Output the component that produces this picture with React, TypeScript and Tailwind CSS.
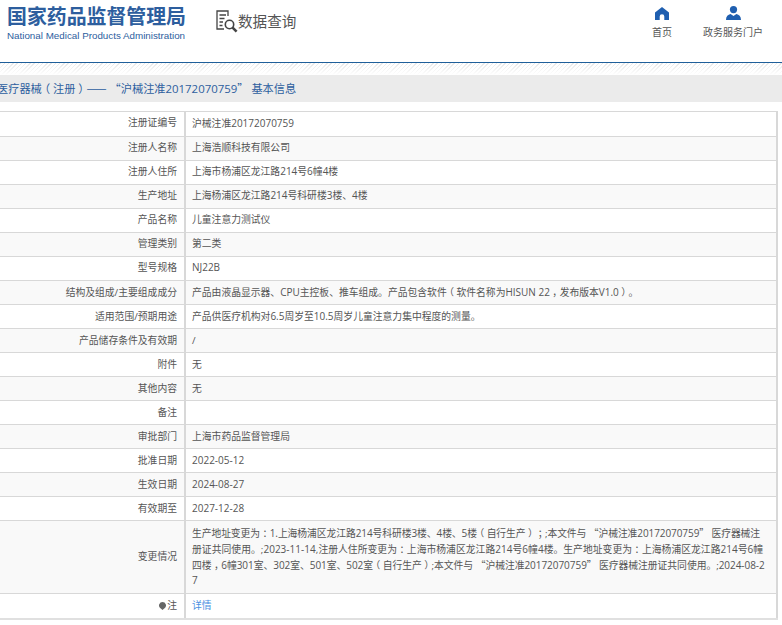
import React from "react";

// Punctuation drawn centred in its em box, quotes and dashes from the CJK face, Latin runs a touch larger.
function fmt(s: string): React.ReactNode[] {
  return s.split(/([（）：；，“”]|—+|[0-9A-Za-z.\-]+)/).map((p, i) => {
    if (!p) return null;
    if ("（）：；，".includes(p))
      return (
        <span key={i} className="px-[0.25em] font-['Noto_Sans_CJK_SC'] [font-feature-settings:'halt']">
          {p}
        </span>
      );
    if (p.startsWith("—"))
      return (
        <span key={i} className="font-['Noto_Sans_CJK_SC'] text-[12px]">
          {p}
        </span>
      );
    if ("“”".includes(p))
      return (
        <span key={i} className="font-['Noto_Sans_CJK_SC']">
          {p}
        </span>
      );
    if (/^[0-9A-Za-z.\-]+$/.test(p))
      return (
        <span key={i} className="text-[1.02em]">
          {p}
        </span>
      );
    return <React.Fragment key={i}>{p}</React.Fragment>;
  });
}

const rows: [string, string][] = [
  ["注册证编号", "沪械注准20172070759"],
  ["注册人名称", "上海浩顺科技有限公司"],
  ["注册人住所", "上海市杨浦区龙江路214号6幢4楼"],
  ["生产地址", "上海杨浦区龙江路214号科研楼3楼、4楼"],
  ["产品名称", "儿童注意力测试仪"],
  ["管理类别", "第二类"],
  ["型号规格", "NJ22B"],
  ["结构及组成/主要组成成分", "产品由液晶显示器、CPU主控板、推车组成。产品包含软件（软件名称为HISUN 22，发布版本V1.0）。"],
  ["适用范围/预期用途", "产品供医疗机构对6.5周岁至10.5周岁儿童注意力集中程度的测量。"],
  ["产品储存条件及有效期", "/"],
  ["附件", "无"],
  ["其他内容", "无"],
  ["备注", "\u00a0"],
  ["审批部门", "上海市药品监督管理局"],
  ["批准日期", "2022-05-12"],
  ["生效日期", "2024-08-27"],
  ["有效期至", "2027-12-28"],
];

const changeLines: [string, string][] = [
  ["生产地址变更为：1.上海杨浦区龙江路214号科研楼3楼、4楼、5楼（自行生产）；;本文件与 “沪械注准20172070759” 医疗器械注", "tracking-[-0.08px]"],
  ["册证共同使用。;2023-11-14,注册人住所变更为：上海市杨浦区龙江路214号6幢4楼。生产地址变更为：上海杨浦区龙江路214号6幢", "tracking-[0.03px]"],
  ["四楼，6幢301室、302室、501室、502室（自行生产）;本文件与 “沪械注准20172070759” 医疗器械注册证共同使用。;2024-08-2", "tracking-[-0.04px]"],
  ["7", ""],
];

function Row({
  label,
  children,
  shaded,
  last,
  first,
  lift,
}: {
  label: React.ReactNode;
  children: React.ReactNode;
  shaded: boolean;
  last?: boolean;
  first?: boolean;
  lift?: boolean;
}) {
  const pad = lift ? "pb-[2px]" : "";
  return (
    <div className={`flex ${last ? "" : "border-b"} border-[#d8d8d8] ${shaded ? "bg-[#f9f9f9]" : "bg-white"}`}>
      <div className={`flex w-[186px] shrink-0 items-center justify-end border-r-2 border-[#d8d8d8] pr-[7px] ${pad}`}>{label}</div>
      <div className={`flex flex-1 items-center pl-[6px] ${pad} ${last || first ? "h-[24px]" : "min-h-[23px]"}`}>{children}</div>
    </div>
  );
}

export default function App() {
  return (
    <div className="h-[625px] w-[782px] overflow-hidden bg-white text-[#555] font-['Open_Sans','Noto_Sans_CJK_SC','Liberation_Sans',sans-serif]">
      <header className="flex h-[62px]">
        <div className="ml-[7px] w-[190px] pt-[4px] font-['Noto_Sans_CJK_SC']">
          <div className="whitespace-nowrap text-[19.9px] font-bold leading-[24px] text-[#2d5e9e]">国家药品监督管理局</div>
          <div className="mt-[2px] whitespace-nowrap font-['Liberation_Sans'] text-[9.8px] leading-[12px] text-[#2d5e9e]">National Medical Products Administration</div>
        </div>
        <div className="ml-[19px] flex h-[42px] items-center">
          <svg width="22" height="23" viewBox="0 0 22 23" fill="none" stroke="#444" strokeWidth="1.3">
            <path d="M12 6V1H1v18h7" />
            <path d="M3.500 5h6.500M3.500 8.500h5M3.500 12h3.500M3.500 15.500h3" />
            <circle cx="13.500" cy="14.500" r="4.200" strokeWidth="1.600" />
            <path d="M16.600 17.600l4 4" strokeWidth="2.600" />
          </svg>
          <span className="whitespace-nowrap font-['Noto_Sans_CJK_SC'] text-[14.6px] text-[#555]">数据查询</span>
        </div>
        <nav className="ml-auto flex text-[10px] leading-[14px] text-[#555]">
          <div className="mr-[31px] flex flex-col items-center pt-[7px]">
            <svg width="14" height="13" viewBox="0 0 14 13" fill="#1f5fb0">
              <path fillRule="evenodd" d="M7 0l7 5.500V13H9.300V9.500a2.300 2.300 0 0 0-4.600 0V13H0V5.500z" />
            </svg>
            <span className="mt-[5px]">首页</span>
          </div>
          <div className="mr-[19px] flex flex-col items-center pt-[6px]">
            <svg width="15" height="14" viewBox="0 0 15 14" fill="#1f5fb0">
              <circle cx="7.500" cy="3.600" r="3.600" />
              <path d="M0 14c0-3.400 2-5.400 4.600-5.900L7.500 10l2.900-1.900C13 8.600 15 10.600 15 14z" />
            </svg>
            <span className="mt-[5px]">政务服务门户</span>
          </div>
        </nav>
      </header>
      <div className="h-[1px] bg-[#1f5f9a]" />
      <div className="h-[12px] bg-[linear-gradient(to_bottom,#ffffff33,#ffffff),repeating-linear-gradient(135deg,#e2e2e2_0,#e2e2e2_1px,#ffffff_1px,#ffffff_3px)]" />
      <div className="flex h-[27px] items-center whitespace-nowrap bg-[#ebebeb] text-[11.2px] text-[#2d5e9e]">
        <span className="-ml-[3px]">{fmt("医疗器械（注册）—— “沪械注准20172070759” 基本信息")}</span>
      </div>
      <main className="mr-[4px] mt-[9px] border-r-2 border-t border-[#d8d8d8] text-[9.8px] leading-[16px]">
        {rows.map(([l, v], i) => (
          <Row key={i} label={l} shaded={i % 2 === 1} first={i === 0} lift={i < 7}>
            <span>{fmt(v)}</span>
          </Row>
        ))}
        <Row shaded label="变更情况">
          <div className="flex h-[72px] flex-col justify-center whitespace-nowrap pt-[1px] leading-[15.7px]">
            {changeLines.map(([line, cls], i) => (
              <div key={i} className={`h-[15.7px] ${cls}`}>{fmt(line)}</div>
            ))}
          </div>
        </Row>
        <Row
          shaded={false}
          last
          label={
            <span className="flex items-center gap-[1px]">
              <svg width="7" height="8" viewBox="0 0 7 8" fill="#666">
                <path d="M3.500 0a3.500 3.500 0 0 1 2.300 6.100L3.500 8 1.200 6.100A3.500 3.500 0 0 1 3.500 0z" />
              </svg>
              注
            </span>
          }
        >
          <a className="text-[#4a90e2]">详情</a>
        </Row>
      </main>
      <div className="mr-[4px] h-[2px] bg-[#e0e0e0]" />
    </div>
  );
}
